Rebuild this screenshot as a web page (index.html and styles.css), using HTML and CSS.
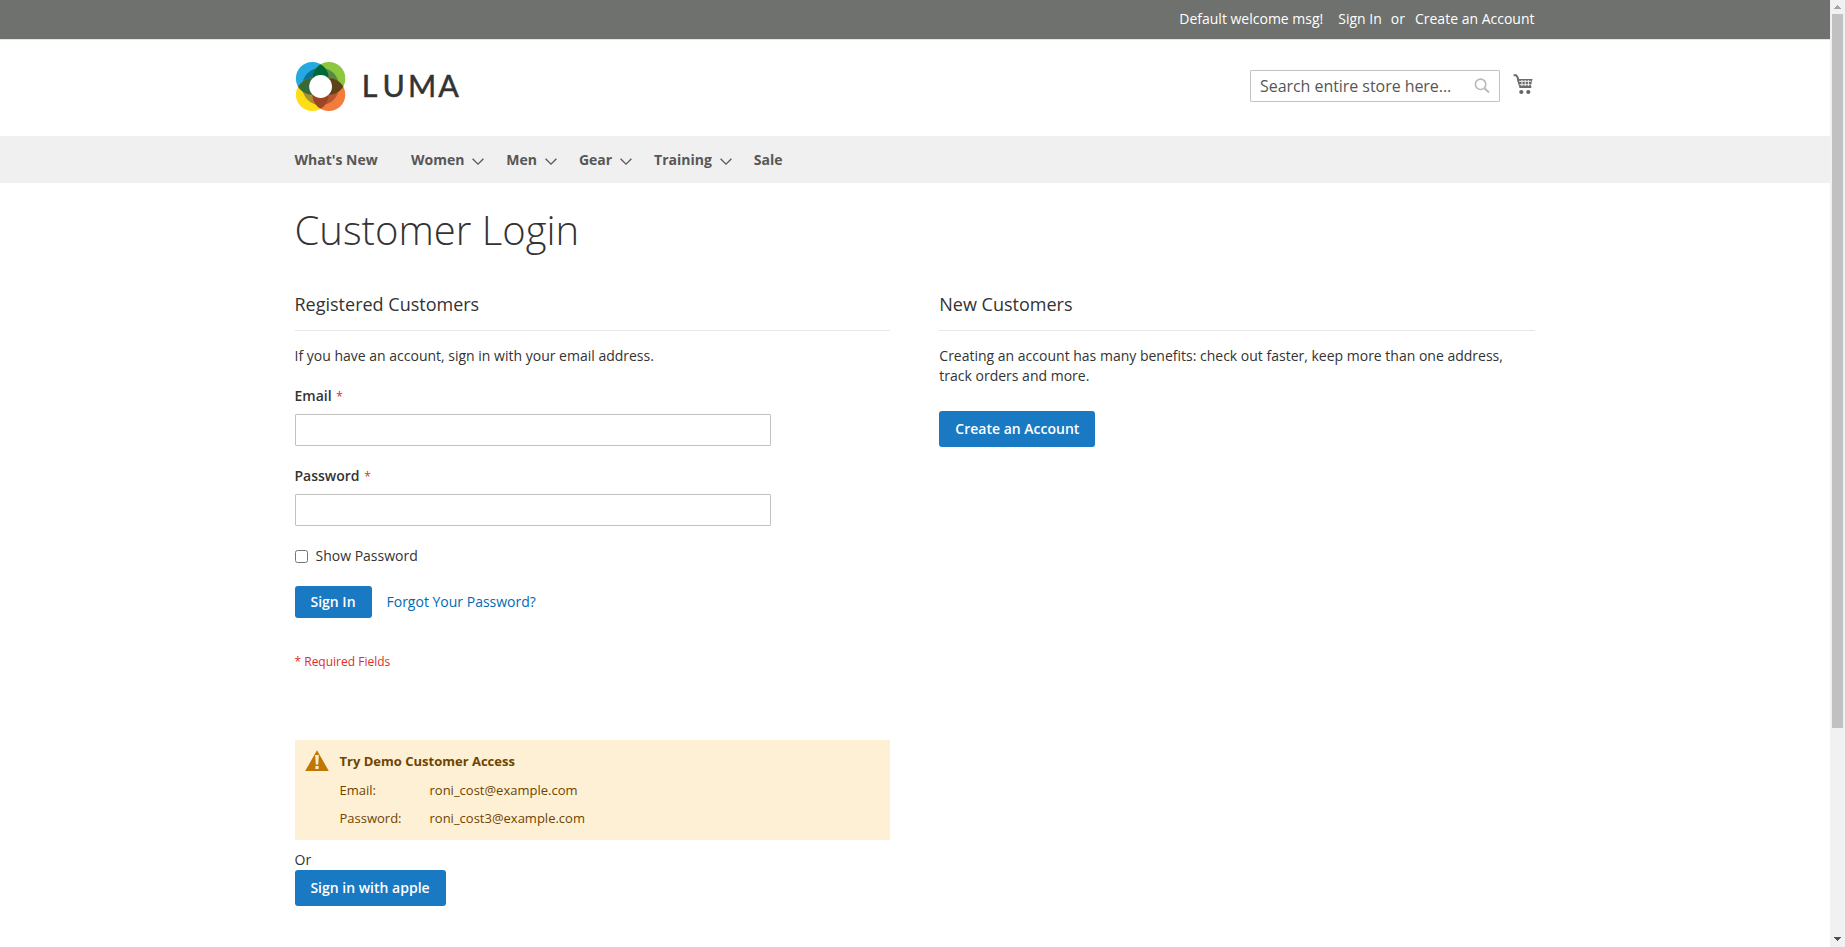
FILE: index.html
```html
<!DOCTYPE html>
<html lang="en">
<head>
<meta charset="utf-8">
<title>Customer Login</title>
<link rel="stylesheet" href="styles.css">
</head>
<body>
<div class="viewport">
<div class="page">
  <div class="panel">
    <div class="container panel-links">
      <span class="welcome">Default welcome msg!</span>
      <a class="signin">Sign In</a>
      <span class="or">or</span>
      <a>Create an Account</a>
    </div>
  </div>
  <header class="container header">
    <svg class="logo" width="170" height="52" viewBox="0 0 170 52">
      <defs>
        <clipPath id="blue"><circle cx="17.3" cy="17.4" r="16.4"/></clipPath>
        <clipPath id="orange"><circle cx="33.9" cy="33.6" r="16.4"/></clipPath>
        <clipPath id="ring"><circle cx="25.6" cy="25.5" r="18.6"/></clipPath>
      </defs>
      <circle cx="17.3" cy="17.4" r="16.4" fill="#26a8e0"/>
      <circle cx="33.9" cy="17.4" r="16.4" fill="#8dc63f"/>
      <circle cx="17.3" cy="33.6" r="16.4" fill="#ffde17"/>
      <circle cx="33.9" cy="33.6" r="16.4" fill="#f37b3c"/>
      <g clip-path="url(#ring)">
        <circle cx="17.3" cy="17.4" r="16.4" fill="#0b7399"/>
        <circle cx="33.9" cy="17.4" r="16.4" fill="#588a3b"/>
        <circle cx="17.3" cy="33.6" r="16.4" fill="#a8902f"/>
        <circle cx="33.9" cy="33.6" r="16.4" fill="#b8562f"/>
      </g>
      <g clip-path="url(#blue)">
        <circle cx="33.9" cy="17.4" r="16.4" fill="#006838"/>
        <circle cx="17.3" cy="33.6" r="16.4" fill="#386a38"/>
      </g>
      <g clip-path="url(#orange)">
        <circle cx="33.9" cy="17.4" r="16.4" fill="#5c4319"/>
        <circle cx="17.3" cy="33.6" r="16.4" fill="#9c4524"/>
      </g>
      <circle cx="25.6" cy="25.5" r="11.4" fill="#fff"/>
      <text class="wordmark" x="66.8 87.4 112.9 143.2" y="35.7">LUMA</text>
    </svg>
    <div class="tools">
      <div class="search">
        <span>Search entire store here...</span>
        <svg width="16" height="16" viewBox="0 0 16 16" fill="none" stroke="#b9b9b9"><circle cx="6.6" cy="6.3" r="5.2" stroke-width="1.6"/><path d="M10.5 10.2 15 14.5" stroke-width="2"/></svg>
      </div>
      <svg class="cart" width="21" height="21" viewBox="0 0 21 21"><path d="M.6 1.2h2.5l1.4 2 3 9.8h10.8" fill="none" stroke="#6b6b6b" stroke-width="2"/><path d="M3.8 5h15.8l-1.6 6.2-1.1 2.8H6.7z" fill="#6b6b6b"/><path d="M6 7.3h12.4M6.6 10.7h11M9 6v6M12.2 6v6M15.4 6v6" stroke="#eee" stroke-width="1"/><circle cx="8.3" cy="18" r="2.1" fill="#666"/><circle cx="15.3" cy="18" r="2.1" fill="#666"/></svg>
    </div>
  </header>
  <nav class="nav">
    <div class="container nav-items">
      <a class="first">What's New</a>
      <a>Women<svg width="12" height="8" viewBox="0 0 12 8"><path d="M.6.8 6 6.2 11.4.8"/></svg></a>
      <a>Men<svg width="12" height="8" viewBox="0 0 12 8"><path d="M.6.8 6 6.2 11.4.8"/></svg></a>
      <a>Gear<svg width="12" height="8" viewBox="0 0 12 8"><path d="M.6.8 6 6.2 11.4.8"/></svg></a>
      <a>Training<svg width="12" height="8" viewBox="0 0 12 8"><path d="M.6.8 6 6.2 11.4.8"/></svg></a>
      <a>Sale</a>
    </div>
  </nav>
  <main class="container">
    <h1>Customer Login</h1>
    <div class="columns">
      <section>
        <h2>Registered Customers</h2>
        <p>If you have an account, sign in with your email address.</p>
        <div class="field"><label for="email">Email <em>*</em></label><input id="email" type="text"></div>
        <div class="field"><label for="pass">Password <em>*</em></label><input id="pass" type="password"></div>
        <div class="choice"><input id="show" type="checkbox"><label for="show">Show Password</label></div>
        <div class="actions"><button class="btn small">Sign In</button><a>Forgot Your Password?</a></div>
        <div class="required">* Required Fields</div>
        <div class="notice">
          <svg width="24" height="22" viewBox="0 0 24 22"><path d="M12 .2 23.8 21H.2z" fill="#c07600"/><path d="M10.2 5h3.6l-.6 9.6h-2.4z" fill="#fdf0d5"/><path d="M10.4 16h3.2v3h-3.2z" fill="#fdf0d5"/></svg>
          <div>
            <strong>Try Demo Customer Access</strong>
            <div class="row"><span>Email:</span><span>roni_cost@example.com</span></div>
            <div class="row"><span>Password:</span><span>roni_cost3@example.com</span></div>
          </div>
        </div>
        <div class="alt">Or</div>
        <button class="btn apple">Sign in with apple</button>
      </section>
      <section>
        <h2>New Customers</h2>
        <p>Creating an account has many benefits: check out faster, keep more than one address, track orders and more.</p>
        <button class="btn create">Create an Account</button>
      </section>
    </div>
  </main>
</div>
<div class="scrollbar">
  <svg width="15" height="14" viewBox="0 0 15 14" shape-rendering="crispEdges"><path d="M7 5h1v1h1v1h1v1h1v1H4V8h1V7h1V6h1z" fill="#a3a3a3"/></svg>
  <div class="thumb"></div>
  <svg class="down" width="15" height="14" viewBox="0 0 15 14" shape-rendering="crispEdges"><path d="M4 4h7v1h-1v1H9v1H8v1H7V7H6V6H5V5H4z" fill="#505050"/></svg>
</div>
</div>
</body>
</html>
```
FILE: styles.css
```css
* { box-sizing: border-box; }
body { margin: 0; overflow: hidden; background: #fff; color: #333; font: 14px/20px "Open Sans", sans-serif; }
.viewport { display: flex; height: 947px; }
.page { width: 1830px; }
.container { width: 1280px; margin: 0 0 0 274.5px; padding: 0 20px; }
.panel { height: 40px; background: #6e716e; border-bottom: 1px solid #e4e4e4; color: #fff; }
.panel-links { display: flex; justify-content: flex-end; padding-top: 9px; }
.welcome { margin-right: 15px; }
.signin { margin-right: 9px; }
.or { margin-right: 10px; }
.header { display: flex; justify-content: space-between; height: 96px; }
.logo { margin: 21px 0 0 .5px; }
.wordmark { font: 400 30.4px Lato, sans-serif; fill: #333; stroke: #333; stroke-width: .5px; }
.tools { display: flex; padding-top: 30px; }
.search { display: flex; align-items: center; justify-content: space-between; width: 250px; height: 32px; padding: 0 9px; border: 1px solid #c2c2c2; border-radius: 1px; color: #575757; font-size: 16px; line-height: 22px; letter-spacing: -.05px; }
.cart { margin: 4px .5px 0 13px; }
.nav { height: 47px; background: #f0f0f0; }
.nav-items { display: flex; color: #575757; font-weight: 700; line-height: 47px; }
.nav-items a { display: flex; align-items: center; margin-right: 21.9px; }
.nav-items .first { margin-right: 33.3px; }
.nav-items svg { margin: 4px 0 0 8px; fill: none; stroke: #575757; stroke-width: 1.3px; }
h1 { margin: 25px 0 42px; font-size: 40px; font-weight: 300; line-height: 44px; }
.columns { display: flex; justify-content: space-between; }
section { width: 595.2px; }
h2 { margin: 0 0 15px; padding-bottom: 16px; border-bottom: 1px solid #e8e8e8; font-size: 18px; font-weight: 400; line-height: 20px; }
p { margin: 0; }
.field { display: flex; flex-direction: column; gap: 8px; margin-top: 20px; }
.field label { height: 20px; font-weight: 600; }
em { margin-left: 1px; color: #e02b27; font-size: 12px; font-weight: 400; font-style: normal; line-height: 1; }
.field input { width: 476px; height: 32px; border: 1px solid #c2c2c2; border-radius: 1px; background: #fff; }
.choice { display: flex; gap: 8px; margin-top: 20px; }
.choice input { width: 13px; height: 13px; margin: 4px 0 0; }
.actions { display: flex; align-items: center; gap: 15px; margin-top: 20px; }
.actions a { color: #006bb4; }
.btn { display: block; height: 36px; padding: 0; border: 0; border-radius: 3px; background: #1979c3; color: #fff; font: 600 14px/20px "Open Sans", sans-serif; }
.small { width: 77px; height: 32px; }
.required { margin-top: 34px; color: #e02b27; font-size: 12px; }
.notice { display: flex; gap: 11px; height: 100px; margin: 68px 0 10px; padding: 10px; background: #fdf0d5; color: #6f4400; font-size: 13px; line-height: 18px; }
.notice strong { display: block; margin: 2px 0 11px; }
.row { display: grid; grid-template-columns: 90px auto; margin-bottom: 10px; }
.apple { width: 151px; }
.create { width: 156px; margin-top: 25px; }
.scrollbar { display: flex; flex-direction: column; width: 15px; background: #f1f1f1; }
.thumb { width: 11px; height: 714px; margin-left: 2px; background: #c1c1c1; }
.down { margin-top: auto; }
```
